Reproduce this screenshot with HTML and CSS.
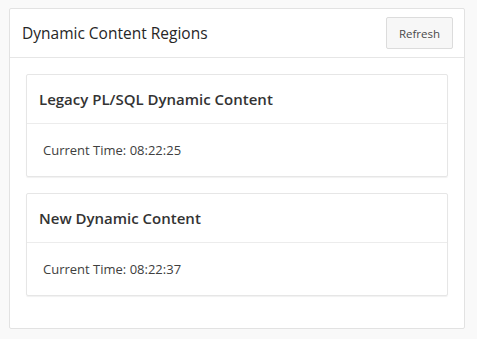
FILE: index.html
```html
<!DOCTYPE html>
<html lang="en">
<head>
  <meta charset="UTF-8">
  <title>Dynamic Content Regions</title>
  <link rel="stylesheet" href="styles.css">
</head>
<body>

<div class="region">
  <div class="region-header">
    <h2>Dynamic Content Regions</h2>
    <button class="btn">Refresh</button>
  </div>
  <div class="region-body">
    <div class="card">
      <div class="card-header"><h3>Legacy PL/SQL Dynamic Content</h3></div>
      <div class="card-body">Current Time: 08:22:25</div>
    </div>
    <div class="card">
      <div class="card-header"><h3>New Dynamic Content</h3></div>
      <div class="card-body">Current Time: 08:22:37</div>
    </div>
  </div>
</div>

</body>
</html>
```
FILE: styles.css
```css
body {
  margin: 0;
  padding: 8px 12px 0 9px;
  background-color: #f9f9f9;
  font-family: "Open Sans", "Noto Sans", sans-serif;
  color: #333;
}
.region {
  background-color: #fff;
  border: 1px solid #e2e2e2;
  border-radius: 2px;
}
.region-header {
  display: flex;
  align-items: center;
  justify-content: space-between;
  height: 48px;
  padding: 0 11px 0 12px;
  border-bottom: 1px solid #e6e6e6;
}
.region-header h2 {
  margin: 0;
  font-size: 15.5px;
  font-weight: normal;
  color: #262626;
}
.btn {
  height: 32px;
  padding: 0 12px;
  background-color: #f7f7f7;
  border: 1px solid #dcdcdc;
  border-radius: 2px;
  font-family: inherit;
  font-size: 11.5px;
  color: #4a4a4a;
}
.region-body {
  padding: 16px;
}
.card {
  border: 1px solid #e6e6e6;
  border-radius: 2px;
  box-shadow: 0 1px 1px rgba(0,0,0,0.06);
  margin-bottom: 16px;
}
.card-header {
  height: 48px;
  display: flex;
  align-items: center;
  padding: 0 12px;
  border-bottom: 1px solid #ececec;
}
.card-header h3 {
  margin: 0;
  font-size: 15px;
  font-weight: 600;
  color: #333;
}
.card-body {
  height: 52px;
  display: flex;
  align-items: center;
  padding: 0 16px;
  font-size: 13px;
  color: #404040;
}
```
